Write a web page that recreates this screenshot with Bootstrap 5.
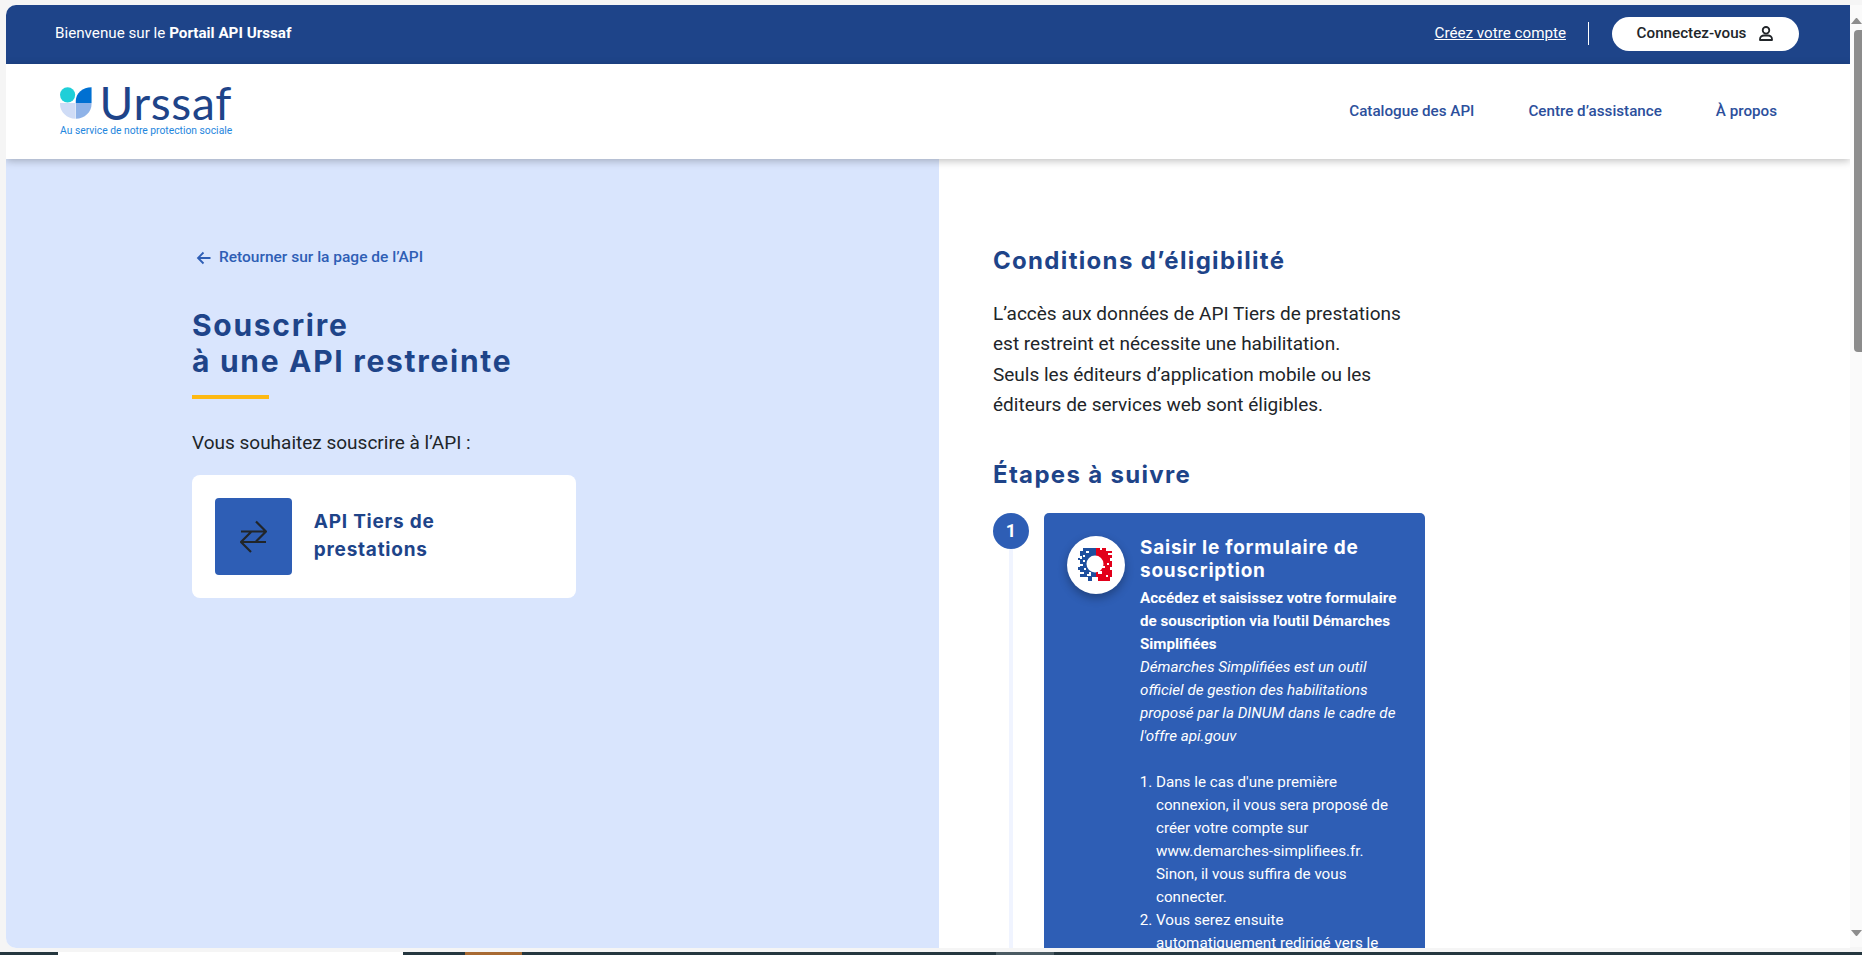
<!DOCTYPE html>
<html lang="fr">
<head>
  <meta charset="UTF-8" />
  <meta name="viewport" content="width=device-width, initial-scale=1.0"/>
  <title>Portail API Urssaf</title>
  <link href="https://cdn.jsdelivr.net/npm/bootstrap@5.3.0/dist/css/bootstrap.min.css" rel="stylesheet">
  <style>
    html, body { height: 955px; overflow: hidden; }
    body { background: #f5f5f5; font-family: Roboto, "Liberation Sans", sans-serif; color: #212529; }

    .desk { height: 947px; padding: 5px 0 0 6px; }
    .app { width: 1844px; border-radius: 10px 0 0 10px; overflow: hidden; background: #fff; height: 943px; }
    .heading { font-family: Inter, "Open Sans", sans-serif; font-weight: 700; color: #1e4489; }

    .top-bar { height: 59px; background: #1e4489; color: #fff; font-size: 15.2px; padding: 0 51px 2px 49px; flex: none; }
    .top-bar strong { font-weight: 700; }
    .top-bar a.signup { color: #fff; margin-right: 22px; }
    .top-sep { width: 1px; height: 23px; background: #fff; margin-right: 23px; }
    .btn-login { width: 187px; height: 34px; background: #fff; color: #212529; font-size: 15.2px; font-weight: 500; border-radius: 17px; border: 0; padding: 0; }
    .btn-login:hover { background: #fff; color: #212529; }

    .main-nav { --bs-navbar-nav-link-padding-x: 0; height: 95px; padding: 0 73px 0 54px; background: #fff; box-shadow: 0 2px 8px rgba(0, 0, 0, .25); position: relative; z-index: 2; flex: none; }
    .main-nav .nav-link { color: #2c4f9c; font-size: 15.2px; font-weight: 500; padding: 0; margin-left: 54px; }
    .logo { width: 172px; }
    .logo-word { font-family: Lato, sans-serif; font-size: 46px; line-height: 34px; color: #1e4489; letter-spacing: .7px; }
    .logo-sub { font-size: 10.3px; color: #1e86dd; line-height: 12px; white-space: nowrap; margin-top: 5px; }

    .panel-left { width: 933px; background: #d9e5fd; padding: 87px 0 0 186px; flex: none; }
    .back-link { color: #2e5eb5; font-size: 15.5px; font-weight: 500; text-decoration: none; margin-left: 4px; }
    .page-title { font-size: 30px; line-height: 36px; letter-spacing: .057em; margin: 35px 0 0; }
    .title-bar { width: 77px; height: 4px; background: #fdb913; margin: 16px 0 32px; }
    .lead-text { font-size: 19px; line-height: 24px; margin-bottom: 20px; }
    .api-card { width: 384px; height: 123px; padding: 23px; border-radius: 8px; background: #fff; }
    .api-icon { width: 77px; height: 77px; background: #2e5eb5; border-radius: 4px; }
    .api-name { font-size: 19px; letter-spacing: .04em; margin-left: 22px; }

    .panel-right { padding: 83px 0 0 54px; min-width: 0; }
    .panel-right h2 { font-size: 24px; line-height: 38px; letter-spacing: .055em; margin: 0; }
    .intro { width: 430px; font-size: 19px; line-height: 30.4px; margin: 19px 0 0; }
    .panel-right .step-title { margin-top: 35px; }
    .steps { margin-top: 19px; }
    .step-num { width: 36px; height: 36px; background: #2e5eb5; color: #fff; font-weight: 700; font-size: 18px; }
    .step-line { width: 4px; background: #f0f4ff; }
    .step-card { width: 381px; min-height: 600px; margin-left: 15px; background: #2e5eb5; color: #fff; padding: 23px 23px 0; border-radius: 5px 5px 0 0; font-size: 15.2px; line-height: 23px; }
    .step-logo { width: 58px; height: 58px; background: #fff; box-shadow: 0 4px 10px rgba(0, 0, 0, .3); flex: none; margin-right: 15px; }
    .step-card h3 { font-size: 19px; line-height: 23px; letter-spacing: .04em; color: #fff; margin: 0 0 5px; }
    .step-card strong { font-weight: 700; }
    .step-card ol { padding-left: 16px; margin: 23px 0 0; }

    .scroll { width: 12px; background: #fafafa; padding-top: 13px; }
    .scroll-up { border: 5px solid transparent; border-top: 0; border-bottom: 6px solid #8c8c8c; margin-left: 1px; }
    .scroll-thumb { width: 8px; height: 322px; margin: 6px 0 0 4px; background: #8c8c8c; border-radius: 4px 0 0 4px; }
    .scroll-down { border: 5px solid transparent; border-bottom: 0; border-top: 6px solid #8c8c8c; margin: 578px 0 0 1px; }

    .taskbar { height: 3px; margin-top: 5px; background: #25373f; }
    .taskbar span { display: block; height: 3px; }
    .task-b { width: 345px; background: #fff; margin-left: 58px; }
    .task-c { width: 57px; background: #a86a32; margin-left: 62px; }
    .task-d { width: 58px; background: #4a5a62; margin-left: 474px; }
  </style>
</head>
<body>

  <div class="desk d-flex">
    <div class="app d-flex flex-column">

      <div class="top-bar d-flex align-items-center justify-content-between">
        <div>Bienvenue sur le <strong>Portail API Urssaf</strong></div>
        <div class="d-flex align-items-center">
          <a class="signup" href="#">Créez votre compte</a>
          <span class="top-sep"></span>
          <button class="btn btn-login d-flex align-items-center justify-content-center gap-2" type="button">
            Connectez-vous
            <svg class="ms-1" width="16" height="15" viewBox="0 0 16 15" fill="none" stroke="#212529" stroke-width="1.8">
              <circle cx="8" cy="4.3" r="3.3"/>
              <path d="M2 14v-.8c0-2.200 1.800-3.700 4-3.700h4c2.200 0 4 1.500 4 3.700v.8z" stroke-linejoin="round"/>
            </svg>
          </button>
        </div>
      </div>

      <nav class="main-nav navbar navbar-expand d-flex align-items-center justify-content-between">
        <a class="logo d-block text-decoration-none" href="#">
          <div class="d-flex align-items-center">
            <svg width="32" height="32" viewBox="0 0 32 32">
              <circle cx="7.7" cy="7.7" r="7.7" fill="#1fcfd8"/>
              <path d="M32 0v16H16V14C16 6 23 0 32 0z" fill="#0070d2"/>
              <path d="M0 16h15.500v16C7 32 0 25 0 17z" fill="#cfdcf6"/>
              <path d="M16 16h16v1c0 8-7 15-16 15z" fill="#8fb3e8"/>
            </svg>
            <span class="logo-word ms-2">Urssaf</span>
          </div>
          <div class="logo-sub">Au service de notre protection sociale</div>
        </a>
        <div class="navbar-nav">
          <a class="nav-link" href="#">Catalogue des API</a>
          <a class="nav-link" href="#">Centre d’assistance</a>
          <a class="nav-link" href="#">À propos</a>
        </div>
      </nav>

      <div class="d-flex flex-grow-1 overflow-hidden">
        <div class="panel-left">
          <a class="back-link d-inline-flex align-items-center gap-2" href="#">
            <svg width="15" height="14" viewBox="0 0 15 14" fill="none" stroke="#2e5eb5" stroke-width="1.8">
              <path d="M14.500 7H2M7.500 1.500 2 7l5.500 5.500"/>
            </svg>
            Retourner sur la page de l’API
          </a>
          <h1 class="heading page-title">Souscrire<br>à une API restreinte</h1>
          <div class="title-bar"></div>
          <p class="lead-text">Vous souhaitez souscrire à l’API :</p>
          <div class="api-card d-flex align-items-center">
            <div class="api-icon d-flex align-items-center justify-content-center">
              <svg width="27" height="33" viewBox="0 0 27 33" fill="none" stroke="#212529" stroke-width="2.2">
                <path d="M1 11.500H25.500M16 1.500l10 10-10 10M26 22H1.500M11 12 1 22l10 10"/>
              </svg>
            </div>
            <div class="heading api-name">API Tiers de prestations</div>
          </div>
        </div>

        <div class="panel-right">
          <h2 class="heading">Conditions d’éligibilité</h2>
          <p class="intro">L’accès aux données de API Tiers de prestations est restreint et nécessite une habilitation.<br>Seuls les éditeurs d’application mobile ou les éditeurs de services web sont éligibles.</p>
          <h2 class="heading step-title">Étapes à suivre</h2>
          <div class="steps d-flex">
            <div class="d-flex flex-column align-items-center">
              <div class="step-num rounded-circle d-flex align-items-center justify-content-center">1</div>
              <div class="step-line flex-grow-1"></div>
            </div>
            <div class="step-card">
              <div class="d-flex">
                <div class="step-logo rounded-circle d-flex align-items-center justify-content-center">
                  <svg width="36" height="36" viewBox="0 0 36 36">
                    <rect x="2" y="1" width="16" height="33" fill="#1e4f9e"/>
                    <rect x="18" y="1" width="16" height="33" fill="#e2001a"/>
                    <circle cx="17" cy="17" r="8.500" fill="#fff"/>
                    <g fill="#fff">
                      <rect x="2" y="1" width="3" height="3"/><rect x="8" y="4" width="3" height="2"/>
                      <rect x="2" y="9" width="2" height="3"/><rect x="5" y="13" width="2" height="2"/>
                      <rect x="2" y="17" width="3" height="2"/><rect x="6" y="21" width="2" height="2"/>
                      <rect x="2" y="25" width="4" height="2"/><rect x="9" y="27" width="4" height="2"/>
                      <rect x="2" y="30" width="8" height="4"/><rect x="14" y="30" width="6" height="4"/>
                      <rect x="22" y="1" width="2" height="2"/><rect x="28" y="1" width="6" height="3"/>
                      <rect x="30" y="6" width="4" height="2"/><rect x="32" y="11" width="2" height="3"/>
                      <rect x="29" y="16" width="2" height="2"/><rect x="32" y="20" width="2" height="3"/>
                      <rect x="28" y="28" width="2" height="2"/><rect x="32" y="30" width="2" height="4"/>
                      <rect x="24" y="19" width="3" height="2"/><rect x="20" y="24" width="4" height="3"/>
                      <rect x="5" y="8" width="2" height="2"/><rect x="11" y="25" width="2" height="2"/>
                    </g>
                    <g fill="#1e4f9e">
                      <rect x="0" y="11" width="2" height="2"/><rect x="0" y="20" width="2" height="3"/><rect x="10" y="31" width="3" height="2"/>
                    </g>
                  </svg>
                </div>
                <div>
                  <h3 class="heading">Saisir le formulaire de souscription</h3>
                  <strong>Accédez et saisissez votre formulaire de souscription via l'outil Démarches Simplifiées</strong><br>
                  <em>Démarches Simplifiées est un outil officiel de gestion des habilitations proposé par la DINUM dans le cadre de l'offre api.gouv</em>
                  <ol>
                    <li>Dans le cas d'une première connexion, il vous sera proposé de créer votre compte sur www.demarches-simplifiees.fr. Sinon, il vous suffira de vous connecter.</li>
                    <li>Vous serez ensuite automatiquement redirigé vers le</li>
                  </ol>
                </div>
              </div>
            </div>
          </div>
        </div>
      </div>

    </div>

    <div class="scroll ms-auto">
      <div class="scroll-up"></div>
      <div class="scroll-thumb"></div>
      <div class="scroll-down"></div>
    </div>
  </div>

  <div class="taskbar d-flex">
    <span class="task-b"></span>
    <span class="task-c"></span>
    <span class="task-d"></span>
  </div>

  <script src="https://cdn.jsdelivr.net/npm/bootstrap@5.3.0/dist/js/bootstrap.bundle.min.js"></script>
</body>
</html>
